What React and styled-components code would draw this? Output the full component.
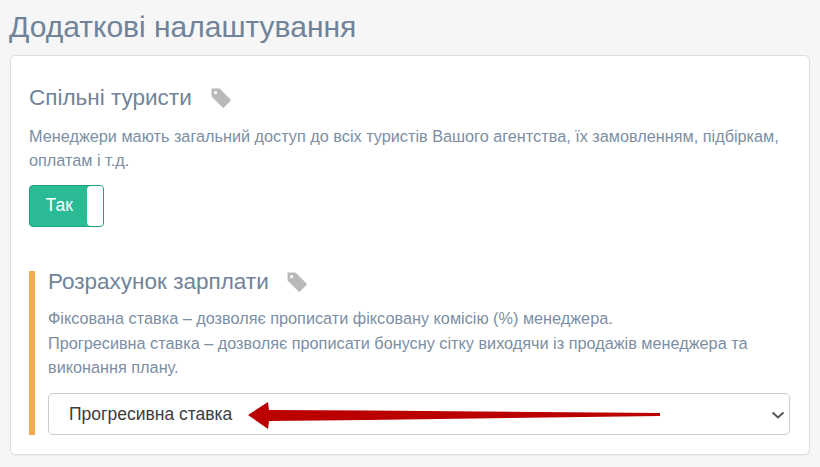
import React from 'react';
import styled, { createGlobalStyle } from 'styled-components';

const Global = createGlobalStyle`
  html, body { margin: 0; padding: 0; background: #f6f6f6; }
  body { font-family: "Liberation Sans", Arial, sans-serif; overflow: hidden; }
`;

const Page = styled.div`
  width: 820px;
  height: 467px;
  padding: 10px 10px 0;
  box-sizing: border-box;
  overflow: hidden;
`;

const PageTitle = styled.h1`
  margin: 0 0 11px -1px;
  font-size: 30px;
  line-height: 34px;
  font-weight: 400;
  color: #708399;
`;

const Card = styled.div`
  box-sizing: border-box;
  width: 800px;
  height: 400px;
  padding: 28px 18px 0;
  background: #fff;
  border: 1px solid #ddd;
  border-radius: 5px;
  box-shadow: 0 1px 1px rgba(0, 0, 0, 0.03);
`;

const Heading = styled.div`
  display: flex;
  align-items: center;
  gap: ${(p) => p.$gap}px;
  font-size: 22.5px;
  line-height: ${(p) => p.$lh}px;
  color: #708399;
`;

const Description = styled.p`
  margin: 12px 0 0;
  font-size: 16.25px;
  line-height: 24px;
  color: #7c8ea3;
`;

const Toggle = styled.div`
  box-sizing: border-box;
  display: flex;
  width: 75px;
  height: 42px;
  margin-top: 13px;
  background: #2abb96;
  border: 1px solid #1fa282;
  border-radius: 4px;
  overflow: hidden;
`;

const ToggleLabel = styled.span`
  flex: 1;
  padding-left: 15.5px;
  font-size: 17.5px;
  line-height: 38px;
  color: #fff;
`;

const ToggleKnob = styled.span`
  width: 16px;
  background: #fff;
  border-radius: 4px 0 0 4px;
`;

const Callout = styled.section`
  position: relative;
  box-sizing: border-box;
  height: 164px;
  margin-top: 44px;
  padding-left: 13px;
  border-left: 6px solid #f0ad4e;
`;

const CalloutDescription = styled(Description)`
  margin-top: 13px;
  line-height: 24.5px;
`;

const SelectWrap = styled.div`
  position: relative;
  width: 742px;
  margin-top: 13px;
`;

const Select = styled.select`
  box-sizing: border-box;
  display: block;
  width: 100%;
  height: 42px;
  padding: 0 20px;
  appearance: none;
  font-family: inherit;
  font-size: 17.5px;
  color: #3c3c3c;
  background: #fff;
  border: 1px solid #ccc;
  border-radius: 5px;
`;

const Chevron = styled.svg`
  position: absolute;
  right: 5px;
  top: 18px;
  pointer-events: none;
`;

const Arrow = styled.svg`
  position: absolute;
  left: 212px;
  top: 130px;
  pointer-events: none;
`;

const Tag = () => (
  <svg width="22" height="22" viewBox="0 0 22 22" aria-hidden="true">
    <path
      fillRule="evenodd"
      fill="#b9b9b9"
      d="M2 1.5h7.5l10.8 10.8a1.4 1.4 0 0 1 0 2l-6 6a1.4 1.4 0 0 1-2 0L1.5 9.5V2a.5.5 0 0 1 .5-.5zM5.6 4a1.6 1.6 0 1 0 0 3.2 1.6 1.6 0 0 0 0-3.2z"
    />
  </svg>
);

export default function App() {
  return (
    <Page>
      <Global />
      <PageTitle>Додаткові налаштування</PageTitle>
      <Card>
        <Heading $gap={18} $lh={28}>
          Спільні туристи <Tag />
        </Heading>
        <Description>
          Менеджери мають загальний доступ до всіх туристів Вашого агентства, їх замовленням, підбіркам, оплатам і т.д.
        </Description>
        <Toggle>
          <ToggleLabel>Так</ToggleLabel>
          <ToggleKnob />
        </Toggle>
        <Callout>
          <Heading $gap={17} $lh={22}>
            Розрахунок зарплати <Tag />
          </Heading>
          <CalloutDescription>
            Фіксована ставка – дозволяє прописати фіксовану комісію (%) менеджера.
            <br />
            Прогресивна ставка – дозволяє прописати бонусну сітку виходячи із продажів менеджера та виконання плану.
          </CalloutDescription>
          <SelectWrap>
            <Select defaultValue="p">
              <option value="f">Фіксована ставка</option>
              <option value="p">Прогресивна ставка</option>
            </Select>
            <Chevron width="14" height="8" viewBox="0 0 14 8" aria-hidden="true">
              <path d="M1.5 1.5 L7 6.5 L12.5 1.5" fill="none" stroke="#555" strokeWidth="2" />
            </Chevron>
          </SelectWrap>
          <Arrow width="420" height="30" viewBox="0 0 420 30" aria-hidden="true">
            <path
              fill="#bb0000"
              d="M1 14 L21 1 L22 9 L120 9.5 L413 12 L413 15 L120 19 L22 20 L21 28 Z"
            />
          </Arrow>
        </Callout>
      </Card>
    </Page>
  );
}
